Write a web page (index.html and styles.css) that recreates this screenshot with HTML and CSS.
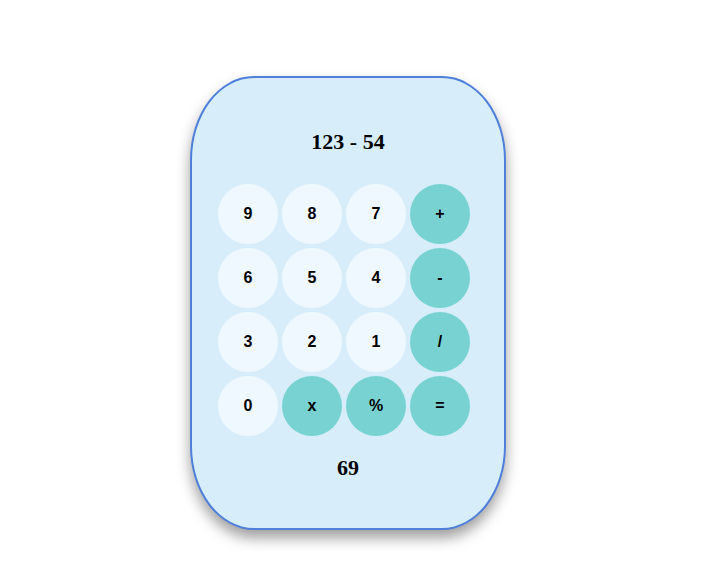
FILE: index.html
```html
<!DOCTYPE html>
<html>
<head>
<meta charset="utf-8">
<link rel="stylesheet" href="styles.css">
</head>
<body>
<div class="calc">
  <div class="expr">123 - 54</div>
  <div class="keys">
    <div class="key num">9</div>
    <div class="key num">8</div>
    <div class="key num">7</div>
    <div class="key op">+</div>
    <div class="key num">6</div>
    <div class="key num">5</div>
    <div class="key num">4</div>
    <div class="key op">-</div>
    <div class="key num">3</div>
    <div class="key num">2</div>
    <div class="key num">1</div>
    <div class="key op">/</div>
    <div class="key num">0</div>
    <div class="key op">x</div>
    <div class="key op">%</div>
    <div class="key op">=</div>
  </div>
  <div class="result">69</div>
</div>
</body>
</html>
```
FILE: styles.css
```css
html, body {
  margin: 0;
  padding: 0;
  background: #ffffff;
}
body {
  width: 708px;
  height: 564px;
  overflow: hidden;
}
.calc {
  box-sizing: border-box;
  margin: 76px 0 0 190px;
  width: 316px;
  height: 454px;
  border: 2px solid #4f7fda;
  border-radius: 64px / 84px;
  background: #d7eefa;
  box-shadow: 0 8px 14px rgba(0, 0, 0, 0.38);
  display: flex;
  flex-direction: column;
  padding-top: 51px;
}
.expr, .result {
  font-family: "Liberation Serif", "Times New Roman", serif;
  font-weight: bold;
  font-size: 22px;
  line-height: 25px;
  text-align: center;
  color: #000;
}
.keys {
  margin-top: 30px;
  padding-left: 26px;
  display: grid;
  grid-template-columns: repeat(4, 60px);
  grid-auto-rows: 60px;
  gap: 4px;
}
.key {
  border-radius: 50%;
  display: flex;
  align-items: center;
  justify-content: center;
  font-family: "Liberation Sans", Arial, sans-serif;
  font-weight: bold;
  font-size: 16px;
  color: #000;
}
.num {
  background: #f0f8ff;
}
.op {
  background: #78d2d1;
}
.result {
  margin-top: 19px;
}
```
